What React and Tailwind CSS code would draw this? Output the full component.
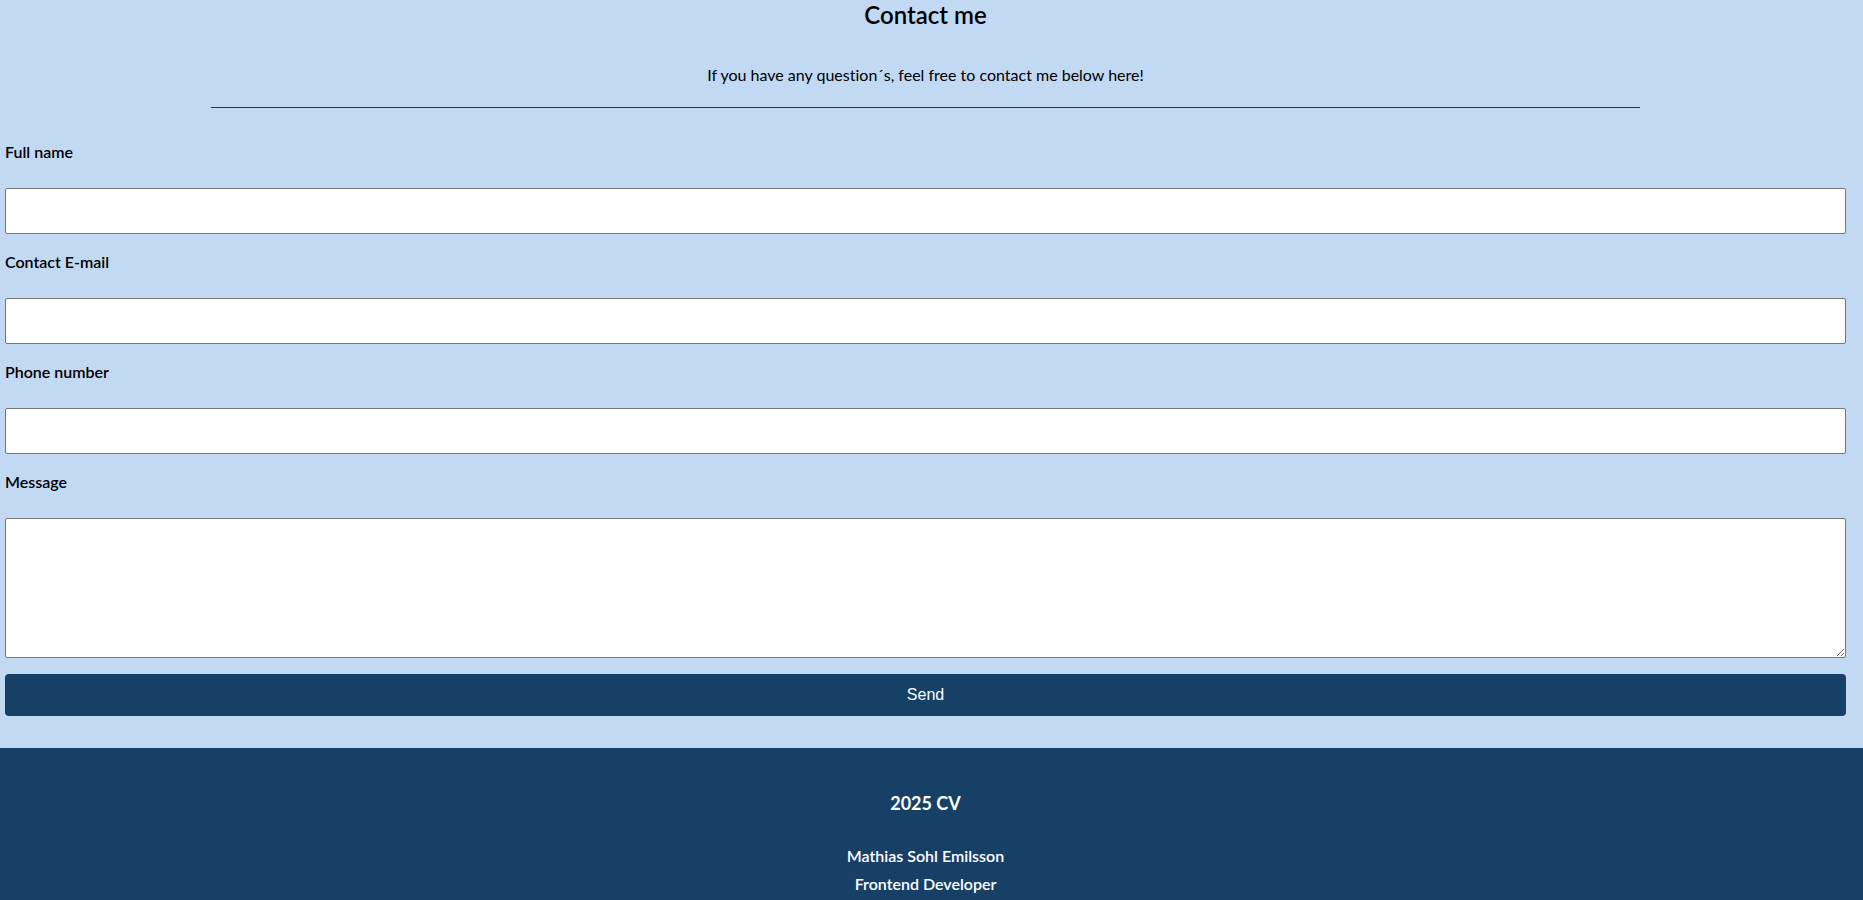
const fields = [
  { id: "name", label: "Full name", type: "text", autoComplete: "name" },
  { id: "email", label: "Contact E-mail", type: "email", autoComplete: "email" },
  { id: "phone", label: "Phone number", type: "tel", autoComplete: "tel" },
];

const labelClass = "mb-[22px] block font-semibold";
const controlClass = "block w-full rounded-xs border border-[#767676] bg-white px-3";

export default function App() {
  return (
    <div className="flex min-h-screen flex-col bg-[#c2d9f3] font-['Lato','Liberation_Sans',sans-serif] text-base leading-7 text-black [font-variant-ligatures:none]">
      <main className="pr-3 pb-8">
        <header className="mx-[11.4%] border-b border-[#174067] pb-[18px] text-center">
          <h1 className="mb-[31px] text-2xl leading-[30px] font-semibold">Contact me</h1>
          <p>If you have any question´s, feel free to contact me below here!</p>
        </header>
        <form className="px-[5px] pt-[30px]" onSubmit={(e) => e.preventDefault()}>
          {fields.map((f) => (
            <div key={f.id} className="mb-3.5">
              <label htmlFor={f.id} className={labelClass}>{f.label}</label>
              <input
                id={f.id}
                name={f.id}
                type={f.type}
                autoComplete={f.autoComplete}
                className={`${controlClass} h-[46px]`}
              />
            </div>
          ))}
          <label htmlFor="message" className={labelClass}>Message</label>
          <textarea id="message" name="message" className={`${controlClass} mb-4 h-[140px] resize py-3`} />
          <button
            type="submit"
            className="block w-full rounded bg-[#174067] py-2 font-['Liberation_Sans',sans-serif] leading-[26px] text-white"
          >
            Send
          </button>
        </form>
      </main>
      <footer className="grow bg-[#174067] pt-10 pr-3 text-center font-semibold text-white">
        <h2 className="mb-6 text-lg leading-[30px] font-bold">2025 CV</h2>
        <p>Mathias Sohl Emilsson</p>
        <p>Frontend Developer</p>
      </footer>
    </div>
  );
}
